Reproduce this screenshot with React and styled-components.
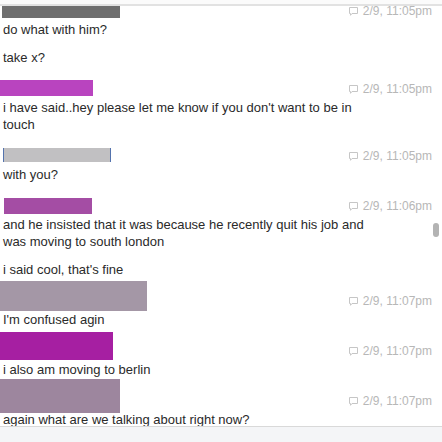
import React from "react";
import styled, { createGlobalStyle } from "styled-components";

const GlobalStyle = createGlobalStyle`
  html, body {
    margin: 0;
    padding: 0;
    background: #ffffff;
  }
  body {
    font-family: "Liberation Sans", Arial, sans-serif;
  }
`;

const messages = [
  {
    time: "2/9, 11:05pm",
    cover: { top: 5, left: 2, width: 118, height: 12, color: "#6f6f6f" },
    lines: ["do what with him?", "take x?"],
  },
  {
    time: "2/9, 11:05pm",
    cover: { top: 1, left: 0, width: 93, height: 16, color: "#b944bf" },
    lines: [
      "i have said..hey please let me know if you don't want to be in touch",
    ],
  },
  {
    time: "2/9, 11:05pm",
    cover: { top: 2, left: 3, width: 106, height: 14, color: "#c1c0c2" },
    link: true,
    lines: ["with you?"],
  },
  {
    time: "2/9, 11:06pm",
    cover: { top: 2, left: 4, width: 88, height: 16, color: "#a44da4" },
    lines: [
      "and he insisted that it was because he recently quit his job and was moving to south london",
      "i said cool, that's fine",
    ],
  },
  {
    time: "2/9, 11:07pm",
    cover: { top: -10, left: 0, width: 147, height: 30, color: "#a497a6" },
    lines: ["I'm confused agin"],
  },
  {
    time: "2/9, 11:07pm",
    cover: { top: -9, left: 0, width: 113, height: 28, color: "#a61fa2" },
    lines: ["i also am moving to berlin"],
  },
  {
    time: "2/9, 11:07pm",
    cover: { top: -12, left: 0, width: 120, height: 34, color: "#9d869e" },
    lines: ["again what are we talking about right now?"],
  },
];

const BubbleIcon = () => (
  <svg width="9" height="9" viewBox="0 0 9 9" fill="none">
    <path
      d="M0.5 0.5H8.5V6.5H3L1.5 8.3V6.5H0.5Z"
      stroke="#c6c6c6"
      strokeWidth="1"
      strokeLinejoin="miter"
    />
  </svg>
);

const App = () => {
  return (
    <Page>
      <GlobalStyle />
      <ScrollArea>
        <List>
          {messages.map((m, i) => (
            <Message key={i}>
              <Header>
                <Redaction
                  $top={m.cover.top}
                  $left={m.cover.left}
                  $width={m.cover.width}
                  $height={m.cover.height}
                  $color={m.cover.color}
                  $link={m.link}
                />
                <Stamp>
                  <BubbleIcon />
                  <span>{m.time}</span>
                </Stamp>
              </Header>
              {m.lines.map((line, j) => (
                <Text key={j}>{line}</Text>
              ))}
            </Message>
          ))}
        </List>
        <Thumb />
      </ScrollArea>
      <Composer />
    </Page>
  );
};

export default App;

const Page = styled.div`
  width: 442px;
  height: 442px;
  display: flex;
  flex-direction: column;
  overflow: hidden;
`;

const ScrollArea = styled.div`
  position: relative;
  height: 426px;
  overflow: hidden;
  background: linear-gradient(
    to bottom,
    #fbfbfb 0,
    #fbfbfb 4px,
    #e2e2e2 4px,
    #e2e2e2 6px,
    #ffffff 6px
  );
`;

const List = styled.div`
  padding-top: 1px;
  display: flex;
  flex-direction: column;
  gap: 13px;
`;

const Message = styled.div`
  display: flex;
  flex-direction: column;
`;

const Header = styled.div`
  position: relative;
  height: 20px;
  display: flex;
  align-items: center;
  justify-content: flex-end;
  padding-right: 10px;
`;

const Redaction = styled.div`
  position: absolute;
  top: ${(p) => p.$top}px;
  left: ${(p) => p.$left}px;
  width: ${(p) => p.$width}px;
  height: ${(p) => p.$height}px;
  background: ${(p) => p.$color};
  border-left: ${(p) => (p.$link ? "1px solid #5473ad" : "none")};
  border-right: ${(p) => (p.$link ? "1px solid #5473ad" : "none")};
`;

const Stamp = styled.div`
  display: flex;
  align-items: center;
  gap: 5px;
  font-size: 12px;
  color: #b7b7b7;
  svg {
    margin-top: 1px;
  }
`;

const Text = styled.p`
  margin: 0;
  padding: 0 62px 0 3px;
  font-size: 13px;
  line-height: 17px;
  color: #2a2a2a;
  & + & {
    margin-top: 11px;
  }
`;

const Thumb = styled.div`
  position: absolute;
  top: 223px;
  right: 3px;
  width: 6px;
  height: 14px;
  border-radius: 3px;
  background: #b3b3b3;
`;

const Composer = styled.div`
  flex: 1;
  border-top: 1px solid #d9d9d9;
  background: #f4f5f7;
`;
